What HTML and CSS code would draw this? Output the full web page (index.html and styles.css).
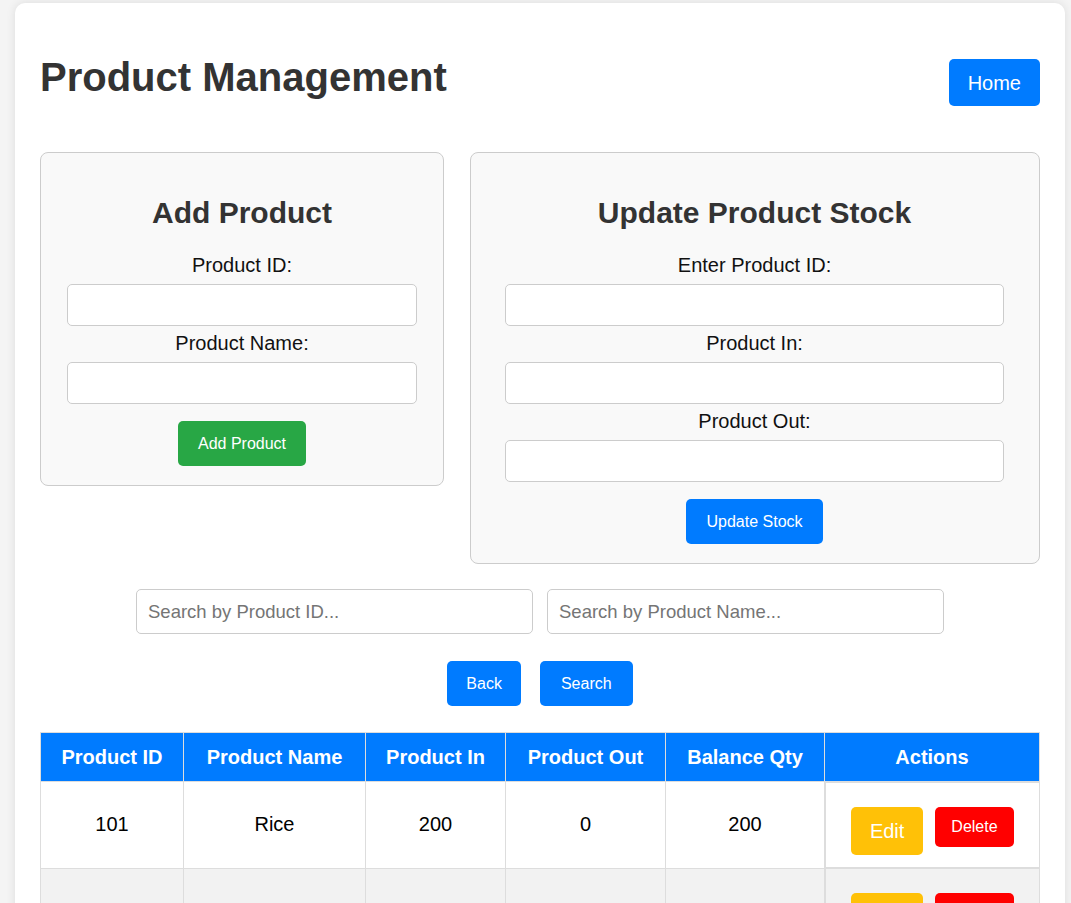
FILE: index.html
```html
<!DOCTYPE html>
<html lang="en">
<head>
<meta charset="UTF-8">
<title>Product Management</title>
<link rel="stylesheet" href="styles.css">
</head>
<body>
<div class="container">
  <div class="header">
    <h1>Product Management</h1>
    <button class="btn btn-blue btn-home">Home</button>
  </div>

  <div class="forms">
    <div class="box box-add">
      <h2>Add Product</h2>
      <label>Product ID:</label>
      <input type="text" class="field">
      <label>Product Name:</label>
      <input type="text" class="field">
      <button class="btn btn-green">Add Product</button>
    </div>
    <div class="box box-update">
      <h2>Update Product Stock</h2>
      <label>Enter Product ID:</label>
      <input type="text" class="field">
      <label>Product In:</label>
      <input type="number" class="field">
      <label>Product Out:</label>
      <input type="number" class="field">
      <button class="btn btn-blue">Update Stock</button>
    </div>
  </div>

  <div class="search-row">
    <input type="text" class="search" placeholder="Search by Product ID...">
    <input type="text" class="search" placeholder="Search by Product Name...">
  </div>
  <div class="search-actions">
    <button class="btn btn-blue btn-back">Back</button>
    <button class="btn btn-blue btn-search">Search</button>
  </div>

  <table class="products">
    <colgroup>
      <col class="c-id">
      <col class="c-name">
      <col class="c-in">
      <col class="c-out">
      <col class="c-bal">
      <col class="c-act">
    </colgroup>
    <thead>
      <tr>
        <th>Product ID</th>
        <th>Product Name</th>
        <th>Product In</th>
        <th>Product Out</th>
        <th>Balance Qty</th>
        <th>Actions</th>
      </tr>
    </thead>
    <tbody>
      <tr>
        <td>101</td>
        <td>Rice</td>
        <td>200</td>
        <td>0</td>
        <td>200</td>
        <td class="actions">
          <button class="btn-edit">Edit</button>
          <button class="btn-delete">Delete</button>
        </td>
      </tr>
      <tr>
        <td>102</td>
        <td>Sugar</td>
        <td>150</td>
        <td>20</td>
        <td>130</td>
        <td class="actions">
          <button class="btn-edit">Edit</button>
          <button class="btn-delete">Delete</button>
        </td>
      </tr>
    </tbody>
  </table>
</div>
</body>
</html>
```

FILE: styles.css
```css
html, body {
  margin: 0;
  padding: 0;
}

body {
  background: #f4f4f4;
  font-family: "Liberation Sans", Arial, sans-serif;
  color: #000;
}

.container {
  width: 1000px;
  margin: 3px 0 0 15px;
  padding: 25px 25px 25px;
  background: #fff;
  border-radius: 10px;
  box-shadow: 0 0 10px rgba(0, 0, 0, 0.1);
}

.header {
  display: flex;
  justify-content: space-between;
  align-items: flex-start;
}

.header h1 {
  margin: 27px 0;
  font-size: 40px;
  line-height: 45px;
  color: #333;
}

.btn {
  border: none;
  border-radius: 5px;
  color: #fff;
  font-family: "Liberation Sans", Arial, sans-serif;
  font-size: 16px;
  line-height: 18px;
  height: 45px;
  padding: 0 20px;
  cursor: pointer;
}

.btn-blue {
  background: #007bff;
}

.btn-green {
  background: #28a745;
}

.btn-home {
  margin-top: 31px;
  height: 47px;
  font-size: 20px;
  padding: 0 19px;
}

.btn-back {
  padding: 0 19px;
}

.btn-search {
  padding: 0 21px;
}

.forms {
  display: flex;
  align-items: flex-start;
  gap: 26px;
  margin-top: 25px;
}

.box {
  background: #f9f9f9;
  border: 1px solid #ccc;
  border-radius: 8px;
  padding: 20px 26px 19px;
  display: flex;
  flex-direction: column;
  align-items: center;
}

.box-add {
  flex: 0 0 404px;
  box-sizing: border-box;
}

.box-update {
  flex: 1;
  padding-left: 34px;
  padding-right: 35px;
}

.box h2 {
  margin: 23px 0 24px;
  font-size: 30px;
  line-height: 34px;
  color: #333;
}

.box label {
  font-size: 20px;
  line-height: 23px;
  color: #111;
}

.field {
  box-sizing: border-box;
  width: 100%;
  height: 42px;
  margin: 7px 0 6px;
  padding: 0 10px;
  border: 1px solid #ccc;
  border-radius: 5px;
  background: #fff;
  font-family: "Liberation Sans", Arial, sans-serif;
  font-size: 18px;
}

.box .btn {
  margin-top: 11px;
}

.search-row {
  display: flex;
  justify-content: center;
  gap: 14px;
  margin-top: 25px;
}

.search {
  box-sizing: border-box;
  width: 397px;
  height: 45px;
  padding: 0 11px;
  border: 1px solid #ccc;
  border-radius: 5px;
  font-family: "Liberation Sans", Arial, sans-serif;
  font-size: 18.5px;
}

.search::placeholder {
  color: #757575;
}

.search-actions {
  display: flex;
  justify-content: center;
  gap: 19px;
  margin-top: 27px;
}

.products {
  width: 999px;
  margin-top: 26px;
  border-collapse: collapse;
  table-layout: fixed;
}

.c-id { width: 143px; }
.c-name { width: 182px; }
.c-in { width: 140px; }
.c-out { width: 160px; }
.c-bal { width: 159px; }
.c-act { width: 215px; }

.products th,
.products td {
  border: 1px solid #ddd;
  text-align: center;
  font-size: 20px;
  line-height: 23px;
}

.products th {
  background: #007bff;
  color: #fff;
  font-weight: bold;
  line-height: 24px;
  padding: 12px 8px;
}

.products td {
  padding: 15px 8px;
  vertical-align: middle;
}

.products tbody tr:nth-child(even) {
  background: #f2f2f2;
}

.products td.actions {
  display: flex;
  justify-content: center;
  align-items: flex-start;
  gap: 12px;
  padding: 24px 15px 12px;
}

.btn-edit,
.btn-delete {
  border: none;
  border-radius: 5px;
  color: #fff;
  font-family: "Liberation Sans", Arial, sans-serif;
  cursor: pointer;
}

.btn-edit {
  background: #ffc107;
  font-size: 20px;
  line-height: 24px;
  padding: 12px 19px;
}

.btn-delete {
  background: #ff0000;
  font-size: 16px;
  line-height: 20px;
  padding: 10px 16px;
}
```
